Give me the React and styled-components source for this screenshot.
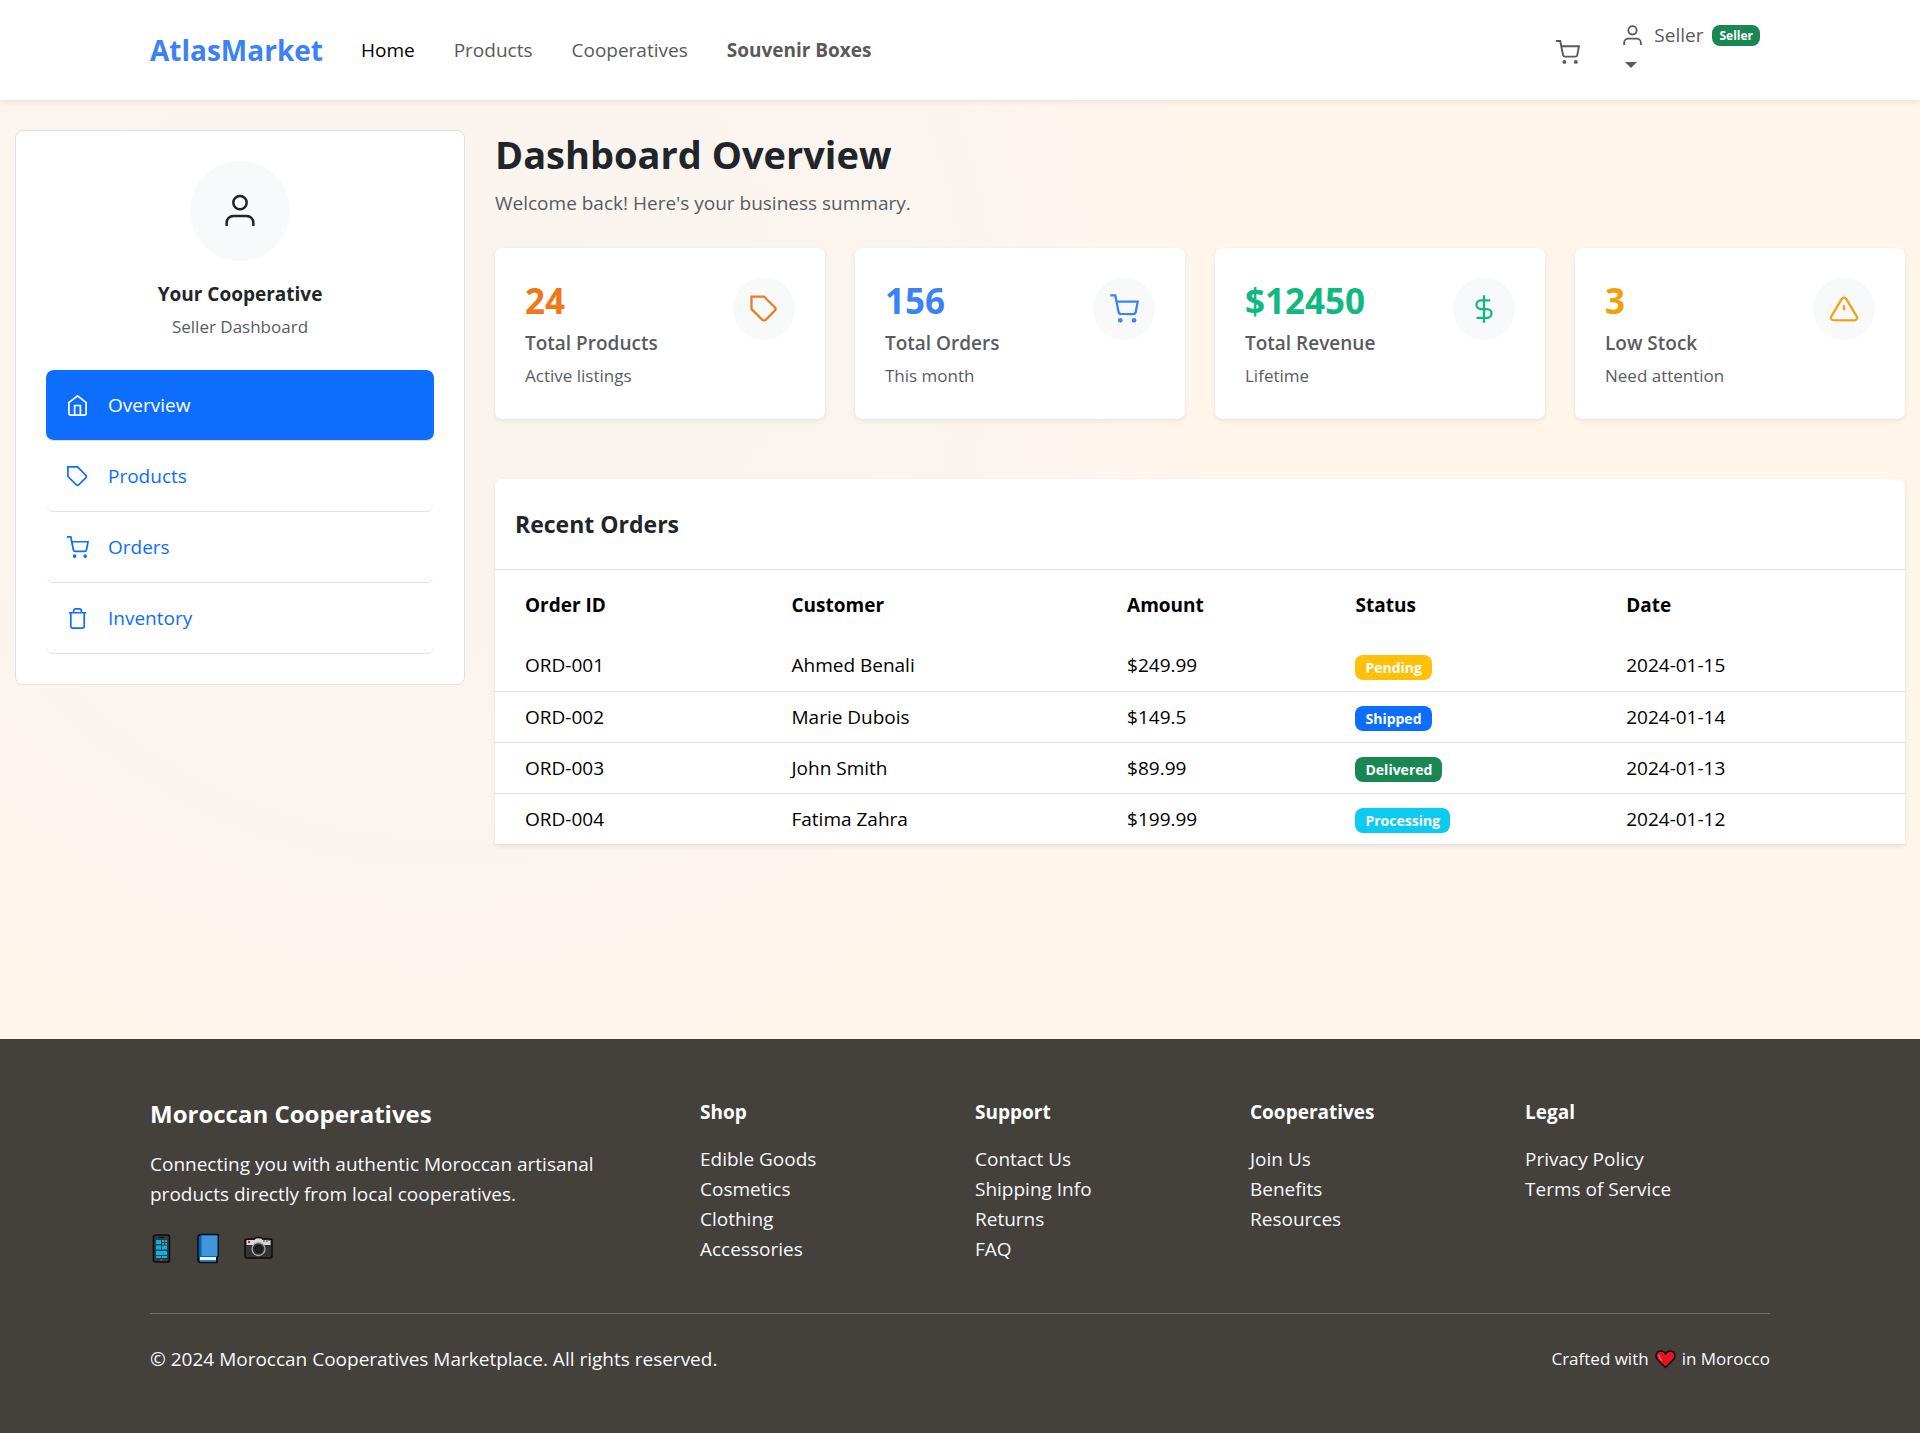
import React from "react";
import styled, { createGlobalStyle } from "styled-components";

const GlobalStyle = createGlobalStyle`
  *, *::before, *::after { box-sizing: border-box; }
  body {
    margin: 0;
    font-family: "Segoe UI", "Open Sans", "Noto Sans", sans-serif;
    font-size: 19px;
    line-height: 30px;
    color: #212529;
  }
  h1, h2, h3, p, ul { margin: 0; padding: 0; }
  ul { list-style: none; }
  a { color: inherit; text-decoration: none; }
`;

const Page = styled.div`
  min-height: 100vh;
  display: flex;
  flex-direction: column;
  background: radial-gradient(
    circle at 23% 22%,
    #f9f5ee 0,
    #faf5ee 490px,
    #fdf4ef 600px,
    #fef5ef 680px,
    #fff5eb 770px,
    #fff5eb 100%
  );
`;

const Container = styled.div`
  width: 100%;
  max-width: 1650px;
  margin: 0 auto;
  padding: 0 15px;
`;

/* ---------- icons ---------- */

const Glyph = styled.svg`
  display: block;
  flex: none;
  width: ${(p) => p.$size}px;
  height: ${(p) => p.$size}px;
  fill: none;
  stroke: currentColor;
  stroke-width: ${(p) => (p.$size < 40 ? 1.8 : 1.5)};
`;

const shapes = {
  user: (
    <>
      <path d="M20 21v-2a4 4 0 0 0-4-4H8a4 4 0 0 0-4 4v2" />
      <circle cx="12" cy="7" r="4" />
    </>
  ),
  cart: (
    <>
      <circle cx="9" cy="21" r="1" />
      <circle cx="20" cy="21" r="1" />
      <path d="M1 1h4l2.68 13.39a2 2 0 0 0 2 1.61h9.72a2 2 0 0 0 2-1.61L23 6H6" />
    </>
  ),
  home: (
    <>
      <path d="M3 9l9-7 9 7v11a2 2 0 0 1-2 2H5a2 2 0 0 1-2-2z" />
      <path d="M9 22V12h6v10" />
    </>
  ),
  tag: (
    <path d="M20.59 13.41l-7.17 7.17a2 2 0 0 1-2.83 0L2 12V2h10l8.59 8.59a2 2 0 0 1 0 2.82z" />
  ),
  trash: (
    <path d="M3 6h18M19 6v14a2 2 0 0 1-2 2H7a2 2 0 0 1-2-2V6m3 0V4a2 2 0 0 1 2-2h4a2 2 0 0 1 2 2v2" />
  ),
  dollar: (
    <path d="M12 1v22M17 5H9.5a3.5 3.5 0 0 0 0 7h5a3.5 3.5 0 0 1 0 7H6" />
  ),
  alert: (
    <path d="M10.29 3.86L1.82 18a2 2 0 0 0 1.71 3h16.94a2 2 0 0 0 1.71-3L13.71 3.86a2 2 0 0 0-3.42 0zM12 9v4" />
  ),
};

const Icon = ({ name, size }) => (
  <Glyph viewBox="0 0 24 24" $size={size} aria-hidden="true">
    {shapes[name]}
  </Glyph>
);

/* ---------- navbar ---------- */

const Navbar = styled.header`
  position: relative;
  background: #fff;
  box-shadow: 0 2px 5px rgba(0, 0, 0, 0.075);
`;

const NavRow = styled(Container)`
  display: flex;
  align-items: center;
  min-height: 100px;
`;

const Brand = styled.a`
  margin-right: 38px;
  font-size: 28px;
  font-weight: 700;
  color: #3b82f6;
`;

const NavLinks = styled.nav`
  display: flex;
  gap: 39px;
  flex: 1;
`;

const NavLink = styled.a`
  color: ${(p) => (p.$active ? "#000" : "#595959")};
  font-weight: ${(p) => (p.$strong ? 700 : 400)};
`;

const NavActions = styled.div`
  display: flex;
  align-items: center;
  gap: 40px;
  padding-right: 10px;
  color: #595959;
`;

const CartLink = styled.a`
  padding-top: 4px;
`;

const UserToggle = styled.button`
  display: flex;
  flex-direction: column;
  align-items: flex-start;
  padding: 0;
  border: 0;
  background: none;
  font: inherit;
  color: inherit;
  cursor: pointer;
`;

const UserLine = styled.span`
  display: flex;
  align-items: center;
  gap: 9px;
`;

const Caret = styled.span`
  margin: 12px 5px;
  border: 6px solid transparent;
  border-top-color: currentColor;
  border-bottom: 0;
`;

const Badge = styled.span`
  display: inline-block;
  padding: ${(p) => (p.$small ? "3px 7px" : "5px 10px")};
  border-radius: 8px;
  background: ${(p) => p.$color};
  color: #fff;
  font-size: ${(p) => (p.$small ? 12 : 14)}px;
  font-weight: 700;
  line-height: 15px;
  vertical-align: middle;
`;

/* ---------- layout ---------- */

const Layout = styled.div`
  flex: 1;
  display: grid;
  grid-template-columns: 1fr 3fr;
  align-items: start;
  padding: 30px 0;
`;

const Column = styled.div`
  min-width: 0;
  padding: 0 15px;
`;

/* ---------- sidebar ---------- */

const Sidebar = styled.aside`
  padding: 30px;
  border: 1px solid #dee2e6;
  border-radius: 8px;
  background: #fff;
`;

const Profile = styled.div`
  display: flex;
  flex-direction: column;
  align-items: center;
  margin-bottom: 30px;
`;

const Avatar = styled.div`
  display: grid;
  place-items: center;
  width: 100px;
  height: 100px;
  margin-bottom: 20px;
  border-radius: 50%;
  background: #f8f9fa;
`;

const ProfileName = styled.h2`
  margin-bottom: 6px;
  font-size: 19px;
  line-height: 27px;
`;

const Small = styled.p`
  font-size: 17px;
  line-height: 26px;
  color: #595c5f;
`;

const SideLink = styled.a`
  display: flex;
  align-items: center;
  gap: 19px;
  padding: 20px;
  border-bottom: 1px solid #dee2e6;
  border-radius: 8px;
  background: ${(p) => (p.$active ? "#0d6efd" : "transparent")};
  color: ${(p) => (p.$active ? "#fff" : "#0d6efd")};
`;

/* ---------- main ---------- */

const Title = styled.h1`
  margin-bottom: 10px;
  font-size: 38px;
  line-height: 48px;
`;

const Lead = styled.p`
  margin-bottom: 30px;
  color: #595c5f;
`;

const Stats = styled.div`
  display: grid;
  grid-template-columns: repeat(4, 1fr);
  gap: 30px;
  margin-bottom: 60px;
`;

const StatCard = styled.section`
  display: flex;
  justify-content: space-between;
  align-items: flex-start;
  padding: 30px;
  border-radius: 8px;
  background: #fff;
  box-shadow: 0 2px 5px rgba(0, 0, 0, 0.075);
`;

const StatValue = styled.div`
  margin-bottom: 5px;
  font-size: 35px;
  font-weight: 700;
  line-height: 45px;
  color: ${(p) => p.$color};
`;

const StatLabel = styled.div`
  margin-bottom: 5px;
  font-weight: 600;
  color: #595c5f;
`;

const StatIcon = styled.div`
  padding: 16px;
  border-radius: 50%;
  background: #f8f9fa;
  color: ${(p) => p.$color};
`;

const Orders = styled.section`
  border-radius: 8px 8px 0 0;
  background: #fff;
  box-shadow: 0 2px 5px rgba(0, 0, 0, 0.075);
`;

const OrdersHead = styled.div`
  padding: 30px 20px;
  border-bottom: 1px solid #dee2e6;
`;

const OrdersTitle = styled.h2`
  font-size: 23px;
  font-weight: 700;
  line-height: 30px;
`;

const Table = styled.table`
  width: 100%;
  table-layout: fixed;
  border-collapse: collapse;
  color: #000;

  th {
    padding: 20px 30px;
    text-align: left;
  }
  td {
    height: 51px;
    padding: 10px 30px;
    border-bottom: 1px solid #dee2e6;
  }
`;

const Col = styled.col`
  width: ${(p) => p.$w}%;
`;

/* ---------- footer ---------- */

const Footer = styled.footer`
  padding: 60px 0 59px;
  background: #44403c;
  color: #f8f9fa;
`;

const FooterGrid = styled.div`
  display: grid;
  grid-template-columns: repeat(6, 1fr);
  column-gap: 30px;
  padding-bottom: 44px;
  border-bottom: 1px solid #73706d;
`;

const FooterIntro = styled.div`
  grid-column: span 2;
`;

const FooterTitle = styled.h2`
  margin-bottom: 20px;
  font-size: 24px;
  line-height: 30px;
  color: #fff;
`;

const FooterHeading = styled.h3`
  margin-bottom: 18px;
  font-size: 19px;
  line-height: 27px;
  color: #fff;
`;

const About = styled.p`
  max-width: 500px;
  margin-bottom: 20px;
`;

const Social = styled.div`
  display: flex;
  gap: 9px;
`;

const SocialLink = styled.a`
  display: block;
  height: 40px;
`;

const Emoji = styled.svg`
  display: block;
  width: 38px;
  height: 40px;
`;

const FooterLink = styled.a`
  display: block;
`;

const FooterBottom = styled.div`
  display: flex;
  justify-content: space-between;
  padding-top: 30px;
`;

const Crafted = styled.p`
  display: flex;
  align-items: center;
  gap: 6px;
  font-size: 17px;
`;

const Heart = styled.svg`
  width: 21px;
  height: 20px;
`;

/* ---------- data ---------- */

const navLinks = [
  { label: "Home", active: true },
  { label: "Products" },
  { label: "Cooperatives" },
  { label: "Souvenir Boxes", strong: true },
];

const sideLinks = [
  { icon: "home", label: "Overview", active: true },
  { icon: "tag", label: "Products" },
  { icon: "cart", label: "Orders" },
  { icon: "trash", label: "Inventory" },
];

const stats = [
  { value: "24", label: "Total Products", note: "Active listings", icon: "tag", color: "#f07818" },
  { value: "156", label: "Total Orders", note: "This month", icon: "cart", color: "#3b82f6" },
  { value: "$12450", label: "Total Revenue", note: "Lifetime", icon: "dollar", color: "#10b981" },
  { value: "3", label: "Low Stock", note: "Need attention", icon: "alert", color: "#f59e0b" },
];

const orders = [
  ["ORD-001", "Ahmed Benali", "$249.99", "Pending", "2024-01-15"],
  ["ORD-002", "Marie Dubois", "$149.5", "Shipped", "2024-01-14"],
  ["ORD-003", "John Smith", "$89.99", "Delivered", "2024-01-13"],
  ["ORD-004", "Fatima Zahra", "$199.99", "Processing", "2024-01-12"],
];

const statusColors = {
  Pending: "#ffc107",
  Shipped: "#0d6efd",
  Delivered: "#198754",
  Processing: "#0dcaf0",
};

const footerColumns = [
  ["Shop", ["Edible Goods", "Cosmetics", "Clothing", "Accessories"]],
  ["Support", ["Contact Us", "Shipping Info", "Returns", "FAQ"]],
  ["Cooperatives", ["Join Us", "Benefits", "Resources"]],
  ["Legal", ["Privacy Policy", "Terms of Service"]],
];

const PhoneEmoji = () => (
  <Emoji viewBox="0 0 38 40" aria-hidden="true">
    <rect x="3.5" y="6" width="16" height="27" rx="2" fill="#383838" stroke="#0c0c0c" strokeWidth="1.6" />
    <path d="M9 8.5h5" stroke="#0c0c0c" strokeWidth="1.2" />
    <g fill="#00b4f0">
      <path d="M6 11h5v4H6zM12 11h2v2h-2zM15 11h2v2h-2zM12 14h2v1.500h-2zM15 14h2v1.500h-2z" />
      <path d="M6 16.500h5v4H6zM12 16.500h5v4h-5zM6 22h11v4H6zM6 27h5v2H6zM12 27h5v2h-5z" />
    </g>
    <path d="M10.500 31h2" stroke="#888" />
  </Emoji>
);

const BookEmoji = () => (
  <Emoji viewBox="0 0 38 40" aria-hidden="true">
    <path d="M1 8.500a3 3 0 0 1 3-3h17v22l-1 1v5H4a3 3 0 0 1-3-3z" fill="#0063b1" stroke="#0c0c0c" strokeWidth="1.6" />
    <path d="M4.500 6.500H20.500V27H4.500z" fill="#4096dd" />
    <path d="M3 28h16v3H3z" fill="#f2f2f2" />
    <path d="M3 31.500h16v1H3z" fill="#4096dd" />
  </Emoji>
);

const CameraEmoji = () => (
  <Emoji viewBox="0 0 38 40" aria-hidden="true">
    <path d="M2 11q0-1 1-1h7l2-1.500h5l2 1.500h7q2 0 2 2v15q0 2-2 2H3q-2 0-2-2V11z" fill="#333" stroke="#0c0c0c" strokeWidth="1.5" />
    <path d="M2.500 11h8l1.500-1.500h5L18.500 11h8v5h-24z" fill="#d8d8d8" />
    <path d="M20 10v3M23 10v3M25 10v2" stroke="#333" />
    <circle cx="5" cy="13" r="1.200" fill="#e81224" />
    <circle cx="14.500" cy="20" r="6.500" fill="#333" stroke="#aaa" strokeWidth="1.3" />
    <circle cx="14.500" cy="20" r="3.500" fill="#222" stroke="#0c0c0c" />
  </Emoji>
);

export default function App() {
  return (
    <Page>
      <GlobalStyle />
      <Navbar>
        <NavRow>
          <Brand href="#">AtlasMarket</Brand>
          <NavLinks>
            {navLinks.map((l) => (
              <NavLink key={l.label} href="#" $active={l.active} $strong={l.strong}>
                {l.label}
              </NavLink>
            ))}
          </NavLinks>
          <NavActions>
            <CartLink href="#" aria-label="Cart">
              <Icon name="cart" size={25} />
            </CartLink>
            <UserToggle type="button">
              <UserLine>
                <Icon name="user" size={25} />
                <span>Seller</span>
                <Badge $small $color="#198754">Seller</Badge>
              </UserLine>
              <Caret />
            </UserToggle>
          </NavActions>
        </NavRow>
      </Navbar>

      <Layout>
        <Column>
          <Sidebar>
            <Profile>
              <Avatar>
                <Icon name="user" size={40} />
              </Avatar>
              <ProfileName>Your Cooperative</ProfileName>
              <Small>Seller Dashboard</Small>
            </Profile>
            <nav>
              {sideLinks.map((l) => (
                <SideLink key={l.label} href="#" $active={l.active}>
                  <Icon name={l.icon} size={23} />
                  {l.label}
                </SideLink>
              ))}
            </nav>
          </Sidebar>
        </Column>

        <Column as="main">
          <Title>Dashboard Overview</Title>
          <Lead>Welcome back! Here's your business summary.</Lead>
          <Stats>
            {stats.map((s) => (
              <StatCard key={s.label}>
                <div>
                  <StatValue $color={s.color}>{s.value}</StatValue>
                  <StatLabel>{s.label}</StatLabel>
                  <Small>{s.note}</Small>
                </div>
                <StatIcon $color={s.color}>
                  <Icon name={s.icon} size={30} />
                </StatIcon>
              </StatCard>
            ))}
          </Stats>
          <Orders>
            <OrdersHead>
              <OrdersTitle>Recent Orders</OrdersTitle>
            </OrdersHead>
            <Table>
              <colgroup>
                <Col $w={18.9} />
                <Col $w={23.8} />
                <Col $w={16.2} />
                <Col $w={19.2} />
                <Col $w={21.9} />
              </colgroup>
              <thead>
                <tr>
                  <th>Order ID</th>
                  <th>Customer</th>
                  <th>Amount</th>
                  <th>Status</th>
                  <th>Date</th>
                </tr>
              </thead>
              <tbody>
                {orders.map(([id, customer, amount, status, date]) => (
                  <tr key={id}>
                    <td>{id}</td>
                    <td>{customer}</td>
                    <td>{amount}</td>
                    <td>
                      <Badge $color={statusColors[status]}>{status}</Badge>
                    </td>
                    <td>{date}</td>
                  </tr>
                ))}
              </tbody>
            </Table>
          </Orders>
        </Column>
      </Layout>

      <Footer>
        <Container>
          <FooterGrid>
            <FooterIntro>
              <FooterTitle>Moroccan Cooperatives</FooterTitle>
              <About>
                Connecting you with authentic Moroccan artisanal products directly from local
                cooperatives.
              </About>
              <Social>
                <SocialLink href="#" aria-label="Phone"><PhoneEmoji /></SocialLink>
                <SocialLink href="#" aria-label="Facebook"><BookEmoji /></SocialLink>
                <SocialLink href="#" aria-label="Instagram"><CameraEmoji /></SocialLink>
              </Social>
            </FooterIntro>
            {footerColumns.map(([heading, links]) => (
              <div key={heading}>
                <FooterHeading>{heading}</FooterHeading>
                <ul>
                  {links.map((l) => (
                    <li key={l}>
                      <FooterLink href="#">{l}</FooterLink>
                    </li>
                  ))}
                </ul>
              </div>
            ))}
          </FooterGrid>
          <FooterBottom>
            <p>© 2024 Moroccan Cooperatives Marketplace. All rights reserved.</p>
            <Crafted>
              Crafted with
              <Heart viewBox="0 0 21 20" role="img" aria-label="love">
                <path
                  d="M10.500 18.500L2.500 10.500C-.5 7 1.500 2 5.700 2c2 0 3.800 1 4.800 2.800C11.500 3 13.300 2 15.300 2c4.200 0 6.200 5 3.200 8.500z"
                  fill="#e81224"
                  stroke="#0c0c0c"
                  strokeWidth="1.5"
                />
                <path d="M4 6q0 3 3 5.500" fill="none" stroke="#f4786a" strokeWidth="1.3" />
              </Heart>
              in Morocco
            </Crafted>
          </FooterBottom>
        </Container>
      </Footer>
    </Page>
  );
}
